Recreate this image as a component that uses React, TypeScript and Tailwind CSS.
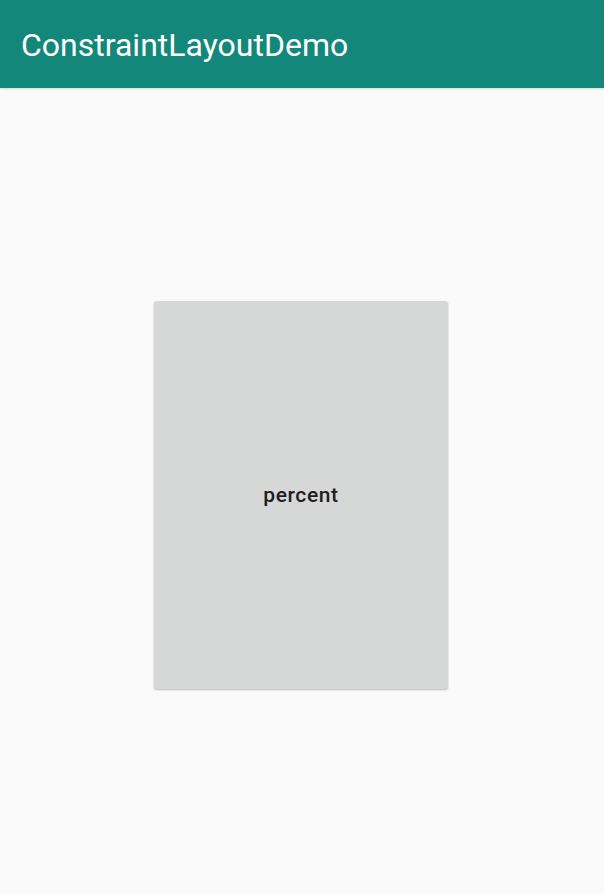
export default function App() {
  return (
    <div className="flex h-[894px] w-[604px] flex-col bg-[#fafafa] font-['Roboto',sans-serif]">
      <header className="flex h-[88px] shrink-0 items-center bg-[#12877a] pl-[21px] pt-[2px] shadow-[0_1px_2px_rgba(0,0,0,0.15)]">
        <h1 className="text-[32px] font-normal leading-none text-white">ConstraintLayoutDemo</h1>
      </header>

      <main className="flex flex-1 items-start pl-[154px] pt-[213px]">
        <button className="flex h-[388px] w-[294px] items-center justify-center rounded-[3px] bg-[#d6d7d7] pt-[2px] font-['Roboto_Medium','Roboto',sans-serif] text-[21px] font-normal tracking-[0.6px] text-[#1f1f1f] shadow-[0_1px_2px_rgba(0,0,0,0.25)]">
          percent
        </button>
      </main>
    </div>
  )
}
